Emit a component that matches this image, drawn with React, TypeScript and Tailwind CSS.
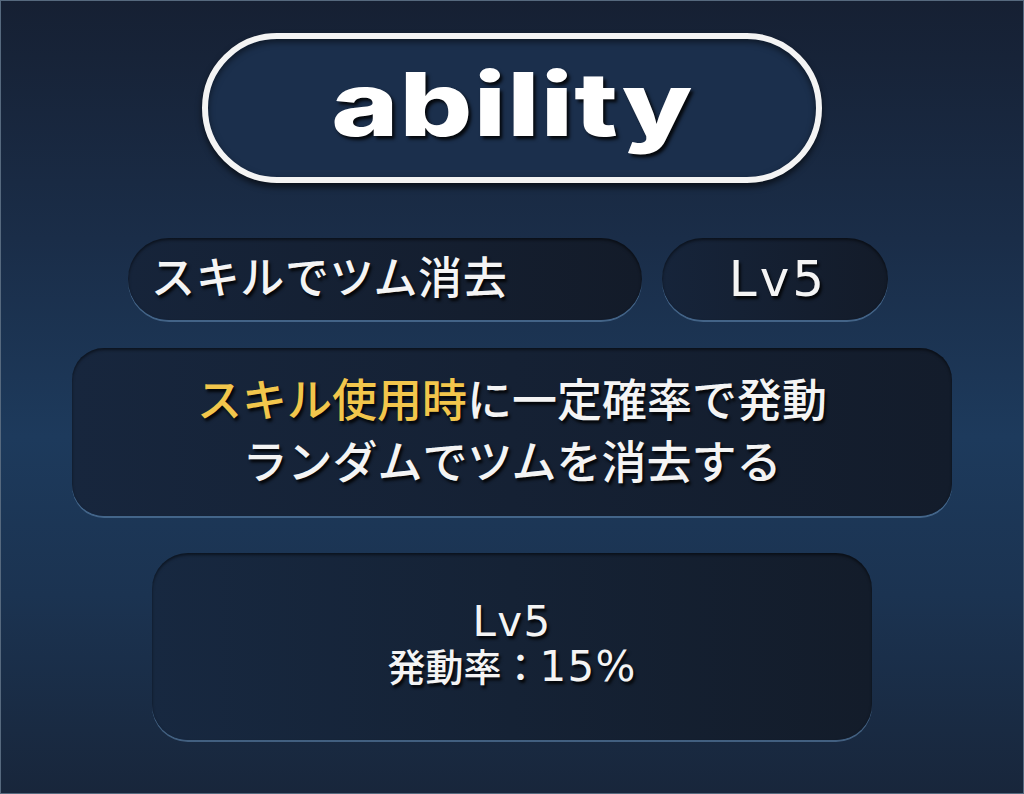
import React from "react";

const jp = { fontFamily: '"DejaVu Sans", "Noto Sans CJK JP", sans-serif' };
const shadow = "[text-shadow:2px_3px_3px_rgba(0,0,0,0.85)]";

export default function App() {
  return (
    <div className="w-[1024px] h-[794px] overflow-hidden border border-[#56697e] bg-[linear-gradient(180deg,#162033_0%,#1a2d48_30%,#1d3a5c_55%,#1b3351_75%,#18263b_100%)] flex flex-col items-center pt-[32px]">
      {/* Title pill */}
      <div className="w-[620px] h-[150px] rounded-full border-[6px] border-[#f4f4f4] bg-[#1b2f4c] shadow-[0_4px_6px_rgba(0,0,0,0.6),inset_0_3px_6px_rgba(0,0,0,0.5)] flex items-center justify-center">
        <span
          className={`inline-block text-[88px] font-extrabold text-white leading-none scale-x-[1.3] tracking-[0.01em] -mt-[8px] ${shadow}`}
          style={{ fontFamily: 'Inter, "Noto Sans", sans-serif' }}
        >
          ability
        </span>
      </div>

      {/* Row 2 */}
      <div className="mt-[55px] -ml-2 flex gap-[20px]">
        <div
          className="w-[514px] h-[82px] rounded-full bg-[linear-gradient(90deg,#16243a,#131b29)] shadow-[0_2px_0_rgba(100,140,180,0.55),inset_0_2px_3px_rgba(0,0,0,0.5)] flex items-center pl-[23px]"
          style={jp}
        >
          <span className={`text-[44px] font-medium text-[#f4f4f4] leading-none tracking-[0.015em] ${shadow}`}>
            スキルでツム消去
          </span>
        </div>
        <div
          className="w-[226px] h-[82px] rounded-full bg-[linear-gradient(90deg,#16243a,#131b29)] shadow-[0_2px_0_rgba(100,140,180,0.55),inset_0_2px_3px_rgba(0,0,0,0.5)] flex items-center justify-center pl-[6px]"
          style={jp}
        >
          <span className={`text-[50px] text-[#f4f4f4] leading-none tracking-[0.06em] ${shadow}`}>
            Lv5
          </span>
        </div>
      </div>

      {/* Description box */}
      <div
        className="mt-[28px] w-[880px] h-[168px] rounded-[32px] bg-[linear-gradient(90deg,#17263d,#131c2b)] shadow-[0_2px_0_rgba(100,140,180,0.55),inset_0_2px_3px_rgba(0,0,0,0.5)] flex flex-col items-center justify-center pt-[2px]"
        style={jp}
      >
        <p className={`text-[45px] font-medium leading-[62px] text-[#f4f4f4] text-center ${shadow}`}>
          <span className="text-[#f2c64c]">スキル使用時</span>に一定確率で発動
        </p>
        <p className={`text-[45px] font-medium leading-[62px] text-[#f4f4f4] text-center ${shadow}`}>
          ランダムでツムを消去する
        </p>
      </div>

      {/* Level box */}
      <div
        className="mt-[37px] w-[720px] h-[187px] rounded-[36px] bg-[linear-gradient(90deg,#172840,#131c2a)] shadow-[0_2px_0_rgba(100,140,180,0.55),inset_0_2px_3px_rgba(0,0,0,0.5)] flex flex-col items-center justify-center pb-[4px]"
        style={jp}
      >
        <p className={`text-[42px] leading-[45px] text-[#f4f4f4] tracking-[0.03em] ${shadow}`}>Lv5</p>
        <p className={`text-[38px] font-medium leading-[45px] text-[#f4f4f4] ${shadow}`}>
          発動率：<span className="text-[42px] tracking-[0.03em]">15%</span>
        </p>
      </div>
    </div>
  );
}
